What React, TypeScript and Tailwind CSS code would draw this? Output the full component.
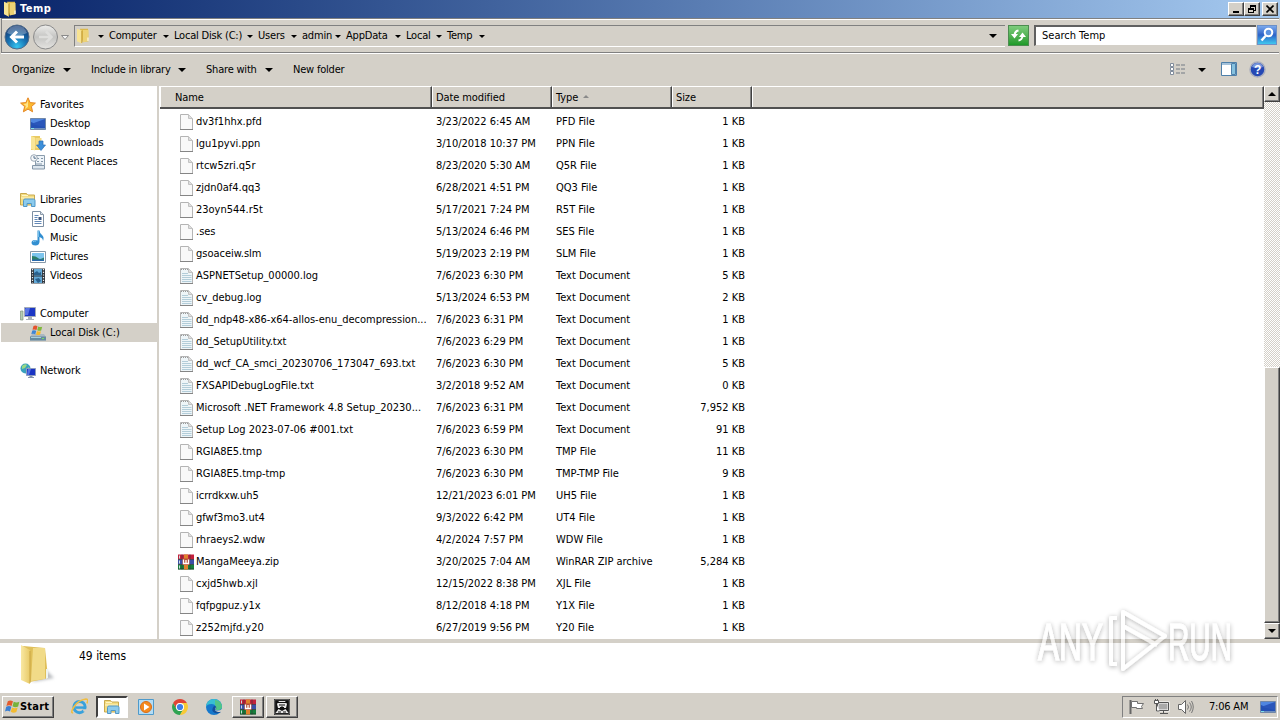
import React from "react"

type FileKind = "blank" | "text" | "rar"

type Entry = {
    name: string
    date: string
    type: string
    size: string
    kind?: FileKind
}

const files: Entry[] = [
    { name: "dv3f1hhx.pfd", date: "3/23/2022 6:45 AM", type: "PFD File", size: "1 KB" },
    { name: "lgu1pyvi.ppn", date: "3/10/2018 10:37 PM", type: "PPN File", size: "1 KB" },
    { name: "rtcw5zri.q5r", date: "8/23/2020 5:30 AM", type: "Q5R File", size: "1 KB" },
    { name: "zjdn0af4.qq3", date: "6/28/2021 4:51 PM", type: "QQ3 File", size: "1 KB" },
    { name: "23oyn544.r5t", date: "5/17/2021 7:24 PM", type: "R5T File", size: "1 KB" },
    { name: ".ses", date: "5/13/2024 6:46 PM", type: "SES File", size: "1 KB" },
    { name: "gsoaceiw.slm", date: "5/19/2023 2:19 PM", type: "SLM File", size: "1 KB" },
    { name: "ASPNETSetup_00000.log", date: "7/6/2023 6:30 PM", type: "Text Document", size: "5 KB", kind: "text" },
    { name: "cv_debug.log", date: "5/13/2024 6:53 PM", type: "Text Document", size: "2 KB", kind: "text" },
    { name: "dd_ndp48-x86-x64-allos-enu_decompression...", date: "7/6/2023 6:31 PM", type: "Text Document", size: "1 KB", kind: "text" },
    { name: "dd_SetupUtility.txt", date: "7/6/2023 6:29 PM", type: "Text Document", size: "1 KB", kind: "text" },
    { name: "dd_wcf_CA_smci_20230706_173047_693.txt", date: "7/6/2023 6:30 PM", type: "Text Document", size: "5 KB", kind: "text" },
    { name: "FXSAPIDebugLogFile.txt", date: "3/2/2018 9:52 AM", type: "Text Document", size: "0 KB", kind: "text" },
    { name: "Microsoft .NET Framework 4.8 Setup_20230...", date: "7/6/2023 6:31 PM", type: "Text Document", size: "7,952 KB", kind: "text" },
    { name: "Setup Log 2023-07-06 #001.txt", date: "7/6/2023 6:59 PM", type: "Text Document", size: "91 KB", kind: "text" },
    { name: "RGIA8E5.tmp", date: "7/6/2023 6:30 PM", type: "TMP File", size: "11 KB" },
    { name: "RGIA8E5.tmp-tmp", date: "7/6/2023 6:30 PM", type: "TMP-TMP File", size: "9 KB" },
    { name: "icrrdkxw.uh5", date: "12/21/2023 6:01 PM", type: "UH5 File", size: "1 KB" },
    { name: "gfwf3mo3.ut4", date: "9/3/2022 6:42 PM", type: "UT4 File", size: "1 KB" },
    { name: "rhraeys2.wdw", date: "4/2/2024 7:57 PM", type: "WDW File", size: "1 KB" },
    { name: "MangaMeeya.zip", date: "3/20/2025 7:04 AM", type: "WinRAR ZIP archive", size: "5,284 KB", kind: "rar" },
    { name: "cxjd5hwb.xjl", date: "12/15/2022 8:38 PM", type: "XJL File", size: "1 KB" },
    { name: "fqfpgpuz.y1x", date: "8/12/2018 4:18 PM", type: "Y1X File", size: "1 KB" },
    { name: "z252mjfd.y20", date: "6/27/2019 9:56 PM", type: "Y20 File", size: "1 KB" },
]

const Icon = ({ children, size = 16 }: { children: React.ReactNode; size?: number }) => (
    <svg width={size} height={size} viewBox="0 0 16 16" className="block shrink-0">
        {children}
    </svg>
)

const PageIcon = ({ lines }: { lines?: boolean }) => (
    <Icon>
        <path d="M2.500.5h8l4 4v11h-12z" fill={lines ? "#eef5f8" : "#f9f9f9"} stroke="#b4b4b4" />
        <path d="M2 15.500h13" stroke="#858585" />
        <path d="M10.500.5v4h4" fill="#dedede" stroke="#c2c2c2" />
        {lines && (
            <>
                <path d="M4 5.500h6M4 7.500h9.500M4 9.500h9.500M4 11.500h9.500M4 13.500h9.500" stroke="#b3cdd9" />
                <path d="M3 1.500h8" stroke="#999" strokeDasharray="1 1" />
            </>
        )}
    </Icon>
)

const RarIcon = () => (
    <Icon>
        <path d="M0 .5h16v5H0z" fill="#c3203c" />
        <path d="M0 5.500h16v5H0z" fill="#3b4ea6" />
        <path d="M0 10.500h16v5H0z" fill="#16803c" />
        <path d="M0 5.500h16M0 10.500h16M0 15h16" stroke="#252525" strokeWidth=".6" />
        <path d="M1.500 1.500v3M1.500 6.500v3M1.500 11.500v3" stroke="#c8dcdc" />
        <path d="M4 .5v5M4 10.500v5M12 .5v5M12 10.500v5" stroke="#333" strokeWidth=".6" />
        <path d="M6 .5h4v15H6z" fill="#e0822c" />
        <path d="M4.500 4.500h7v6.500h-7z" fill="#b84e35" />
        <path d="M5.500 5.500v4h5v-4M8 6v3.500" stroke="#fff" strokeWidth="1.300" fill="none" />
    </Icon>
)

const FolderIcon = () => (
    <Icon>
        <path d="M5 .8h8l.5 12.500-6 .7z" fill="#dcb94a" />
        <path d="M8 2h5.500v11L8 14.500z" fill="#edd274" />
        <path d="M2 .8l5 2v13l-5-2.500z" fill="#f8e392" />
        <path d="M6.800 3v12" stroke="#bf9730" strokeWidth=".9" />
        <path d="M12.500 9.500h1V13h-1z" fill="#fff" />
    </Icon>
)

const StarIcon = () => (
    <Icon>
        <path d="M8 .8l2.100 4.800 5.300.5-4 3.500 1.200 5.200L8 12.100l-4.600 2.700 1.200-5.200-4-3.500 5.300-.5z" fill="#fbb92f" stroke="#e58724" />
        <path d="M8 3v7L5 12l1-3-2.500-2 3-.5z" fill="#ffe48a" />
    </Icon>
)

const DesktopIcon = () => (
    <Icon>
        <path d="M.5 2.500h15v11H.5z" fill="#2350b4" stroke="#7188a8" />
        <path d="M1 3h14v5Q8 10 1 6z" fill="#4f86e0" />
        <path d="M1 8l14-5v8z" fill="#2a56ba" />
        <path d="M1 12.500h14" stroke="#6f8fc0" />
        <path d="M1 12.500h3" stroke="#7fe0e8" />
    </Icon>
)

const DownloadsIcon = () => (
    <Icon>
        <path d="M1 1h9v14H1z" fill="#e9ca63" />
        <path d="M1 1l4 1.500v13L1 14z" fill="#f9e697" />
        <path d="M5.500 3h6v10h-6z" fill="#f4dc84" />
        <path d="M9 6h4v4h2.500L11 15.500 6.500 10H9z" fill="#3c8fda" stroke="#286eb4" strokeWidth=".7" />
    </Icon>
)

const RecentIcon = () => (
    <Icon>
        <path d="M5.500 1.500h9v10h-9z" fill="#eef4f9" stroke="#8a9cac" />
        <path d="M2.500 11.500h12V15h-12zM7 4.500h2m2 0h2M7 7.500h2m2 0h2M6 10h6" fill="#dde6ee" stroke="#8396a8" />
        <circle cx="4" cy="4" r="3.300" fill="#f6f8fa" stroke="#9ca9b5" />
        <path d="M4 2v2.200h2" stroke="#56708c" fill="none" />
    </Icon>
)

const LibrariesIcon = () => (
    <Icon>
        <path d="M.5 1.500h6l1 1.500h7v10H.5z" fill="#f3dd83" stroke="#c9a94d" />
        <path d="M2 3.500h6M1 6h13" stroke="#fff5c4" />
        <path d="M3.500 14.500v-6q0-1.500 1.500-1.500h8.500q1.500 0 1.500 1.500v6h-3.500v-3H7v3z" fill="#8ccbed" stroke="#5298c6" />
    </Icon>
)

const DocumentIcon = () => (
    <Icon>
        <path d="M2.500.5h8l3 3v12h-11z" fill="#fff" stroke="#7d8fa3" />
        <path d="M10.500.5v3h3" fill="#dbe3ec" stroke="#8c9aa9" />
        <path d="M4.500 4.500h4M4.500 6.500h3M4.500 8.500h3M4.500 10.500h7M4.500 12.500h7" stroke="#6288b7" />
        <path d="M8.500 6h3v3h-3z" fill="#3b557d" />
    </Icon>
)

const MusicIcon = () => (
    <Icon>
        <path d="M7.500.5h2q0 2.500 2.500 4.500t1 6q0-3-3.500-4v5q-.5 3.500-4 3.500T1.500 13q0-3 3.500-3 1.500 0 2.500.5z" fill="#328fd1" />
        <path d="M8.300 1v6M3 12q1-1.500 3-1" stroke="#88caef" fill="none" />
    </Icon>
)

const PicturesIcon = () => (
    <Icon>
        <path d="M.5 2.500h15v11H.5z" fill="#fff" stroke="#8798a8" />
        <path d="M2 4h12v8H2z" fill="#7cc4ed" />
        <path d="M2 7q4 0 6 2t6-.5V12H2z" fill="#2b7f68" />
        <path d="M2 10.500h12V12H2z" fill="#2768ab" />
    </Icon>
)

const VideosIcon = () => (
    <Icon>
        <path d="M1 .5h14v15H1z" fill="#30373f" />
        <path d="M4 1h8v6.500H4zM4 8.500h8V15H4z" fill="#63a9d7" />
        <path d="M4 5l3-2 2 2 2-1v3H4zM5 11l4-1 2 3-3 2z" fill="#29618e" />
        <path d="M2.500 1v14M13.500 1v14" stroke="#eee" strokeWidth="1.200" strokeDasharray="1.200 1.500" />
    </Icon>
)

const ComputerIcon = () => (
    <Icon>
        <path d="M.5 5H3v9H.5z" fill="#b4ceb1" stroke="#81927f" strokeWidth=".7" />
        <path d="M4.500 1.500h11v9h-11z" fill="#1c37c6" stroke="#a2aab8" />
        <path d="M6 2h4L8 9H5V3z" fill="#5874e4" />
        <path d="M8 11h4v2h2v1H6v-1h2z" fill="#a9b1bb" />
    </Icon>
)

const DiskIcon = () => (
    <Icon>
        <path d="M2 9h12l2 3v3.500H0V12z" fill="#aab8c2" />
        <path d="M0 11.500h16v4H0z" fill="#668ba0" />
        <path d="M1 12.500h10" stroke="#a8d1dd" />
        <path d="M12 13.500h2" stroke="#77e35d" />
        <path d="M3.500 1q2-1 4 .3L6.500 5q-2-1-4-.2z" fill="#e5532d" />
        <path d="M8.200 1.500q2 1 4 .2l-1 3.800q-2 .7-4-.3z" fill="#7fb93b" />
        <path d="M2.300 5.500q2-.8 4 .2l-1 3.500q-2-1-4-.2z" fill="#3f86d4" />
        <path d="M7 6q2 1 4 .2l-1 3.600q-2 .7-4-.3z" fill="#f4b92d" />
    </Icon>
)

const NetworkIcon = () => (
    <Icon>
        <circle cx="5.500" cy="5.500" r="5" fill="#3aa1bd" />
        <path d="M2 3q3-3 5-1L5 5 2 6zM6 6l3-2 1 3-3 3z" fill="#98d984" />
        <path d="M6.500 5.500h9v7h-9z" fill="#1a34c4" stroke="#8d9bbd" />
        <path d="M8 6h3l-2 6H7z" fill="#5471e3" />
        <path d="M9.500 13h3v1H14v1H8v-1h1.500z" fill="#8594ad" />
    </Icon>
)

const FlagLogo = ({ size = 16 }: { size?: number }) => (
    <Icon size={size}>
        <path d="M3 2.500q2.500-2 5.500 0L7 7.500q-2.500-1.500-5.500 0z" fill="#e35b2d" />
        <path d="M9.300 3q3 1.500 6 0L14 8q-3 1.500-6-.2z" fill="#77b23c" />
        <path d="M1.300 8.300q3-1.500 5.500 0l-1.500 5q-2.500-1.500-5.300 0z" fill="#3b7fd2" />
        <path d="M7.500 9q3 1.500 6 0l-1.400 4.800q-3 1.600-6-.2z" fill="#f3bb31" />
    </Icon>
)

const navItems: { label: string; icon?: React.ReactNode; child?: boolean; active?: boolean }[] = [
    { label: "Favorites", icon: <StarIcon /> },
    { label: "Desktop", icon: <DesktopIcon />, child: true },
    { label: "Downloads", icon: <DownloadsIcon />, child: true },
    { label: "Recent Places", icon: <RecentIcon />, child: true },
    { label: "" },
    { label: "Libraries", icon: <LibrariesIcon /> },
    { label: "Documents", icon: <DocumentIcon />, child: true },
    { label: "Music", icon: <MusicIcon />, child: true },
    { label: "Pictures", icon: <PicturesIcon />, child: true },
    { label: "Videos", icon: <VideosIcon />, child: true },
    { label: "" },
    { label: "Computer", icon: <ComputerIcon /> },
    { label: "Local Disk (C:)", icon: <DiskIcon />, child: true, active: true },
    { label: "" },
    { label: "Network", icon: <NetworkIcon /> },
]

const Caret = ({ small }: { small?: boolean }) => (
    <svg
        width={small ? 6 : 8}
        height={small ? 3 : 4}
        viewBox="0 0 8 4"
        preserveAspectRatio="none"
        className="block shrink-0"
    >
        <path d="M0 0h8L4 4z" fill="#000" />
    </svg>
)

const raised =
    "border border-t-white border-l-white border-r-[#404040] border-b-[#404040] bg-[#d4d0c8] shadow-[inset_-1px_-1px_0_#808080]"

const TitleBar = () => (
    <div className="flex h-[18px] items-center bg-linear-to-r from-[#0a246a] to-[#a6caf0] px-[2px]">
        <FolderIcon />
        <span className="ml-[2px] text-[11px] font-bold tracking-[0.5px] text-white">Temp</span>
        <div className="ml-auto flex">
            <div className={`flex h-[14px] w-4 items-center justify-center ${raised}`}>
                <svg width="10" height="9" className="block">
                    <path d="M2 6h6v2H2z" />
                </svg>
            </div>
            <div className={`flex h-[14px] w-4 items-center justify-center ${raised}`}>
                <svg width="10" height="10" className="block" shapeRendering="crispEdges">
                    <path d="M3 1h6v2H3zM3 3h1v1H3zM8 3h1v4H8zM7 6h1v1H7zM1 4h6v2H1zM1 6h1v3H1zM6 6h1v3H6zM1 8h6v1H1z" />
                </svg>
            </div>
            <div className={`ml-[2px] flex h-[14px] w-4 items-center justify-center ${raised}`}>
                <svg width="8" height="8" className="block">
                    <path d="M.5.5l7 7M7.500.5l-7 7" stroke="#000" strokeWidth="1.600" />
                </svg>
            </div>
        </div>
    </div>
)

const crumbs = [
    { label: "Computer", width: "w-[65px]" },
    { label: "Local Disk (C:)", width: "w-[84px]" },
    { label: "Users", width: "w-[44px]" },
    { label: "admin", width: "w-[44px]" },
    { label: "AppData", width: "w-[60px]" },
    { label: "Local", width: "w-[41px]" },
    { label: "Temp", width: "w-[43px]" },
]

const AddressBar = () => (
    <div className="mx-px flex h-[35px] border-t border-b border-l border-[#808080] pt-[6px] pr-px pl-px tracking-[-0.2px] shadow-[inset_0_1px_0_#fff,0_1px_0_#fff]">
        <svg width="66" height="28" viewBox="0 0 66 28" className="-mt-[2px] block shrink-0">
            <defs>
                <radialGradient id="back" cx=".5" cy=".9" r=".8">
                    <stop offset="0" stopColor="#35c5f0" />
                    <stop offset=".5" stopColor="#1874b4" />
                    <stop offset="1" stopColor="#123c78" />
                </radialGradient>
                <linearGradient id="forward" x1="0" y1="0" x2="0" y2="1">
                    <stop offset="0" stopColor="#eeeeec" />
                    <stop offset=".5" stopColor="#c4c4c2" />
                    <stop offset="1" stopColor="#e5e4e1" />
                </linearGradient>
            </defs>
            <circle cx="14" cy="14" r="12" fill="url(#back)" stroke="#526c88" />
            <path d="M4 10a10.500 10.500 0 0120 0q-10 5-20 0z" fill="#fff" opacity=".3" />
            <path d="M21 14H9M14 8.500L8.500 14l5.500 5.500" fill="none" stroke="#fff" strokeWidth="3" />
            <circle cx="42.500" cy="14" r="12" fill="url(#forward)" stroke="#8a8a8a" />
            <path d="M36 14h12M43 8.500l5.500 5.500-5.500 5.500" fill="none" stroke="#dededc" strokeWidth="2.500" />
            <path d="M58.500 12.500h7l-3.500 4z" fill="#f5f5f5" stroke="#8a8a8a" />
        </svg>
        <div className="ml-[5px] flex h-[22px] w-[931px] items-center border-t border-b border-l border-t-[#808080] border-b-white border-l-[#808080]">
            <FolderIcon />
            <div className="ml-[7px]">
                <Caret small />
            </div>
            {crumbs.map((crumb) => (
                <div key={crumb.label} className={`flex items-center justify-between pl-[5px] ${crumb.width}`}>
                    <span>{crumb.label}</span>
                    <Caret small />
                </div>
            ))}
            <div className="mr-[8px] ml-auto">
                <Caret />
            </div>
        </div>
        <div className="ml-[3px] h-[21px] w-[21px] border border-[#4c8c50] bg-linear-to-b from-[#7ccc7c] to-[#1c9a28]">
            <svg width="19" height="19" className="block">
                <path d="M9.500 4.500Q6 5 5.500 9M9.500 14.500q3.500-.5 4-4.500" stroke="#fff" strokeWidth="2" fill="none" />
                <path d="M2 8h7l-3.500 4.500zM10 11h7l-3.500-4.500z" fill="#fff" />
            </svg>
        </div>
        <div className="ml-[5px] flex h-[21px] w-[222px] items-center border-t-2 border-b border-l-2 border-t-[#606060] border-b-[#d4d0c8] border-l-[#606060] bg-white pl-[6px]">
            <span className="tracking-normal">Search Temp</span>
        </div>
        <div className="ml-px h-5 w-5 border border-[#6b90c8] bg-linear-to-b from-[#7aa8ec] via-[#2d62c8] to-[#42c8ee]">
            <svg width="18" height="18" className="block">
                <circle cx="10.500" cy="6.500" r="3.800" fill="#5b92e0" stroke="#fff" strokeWidth="2" />
                <path d="M7.500 10L3.500 14.500" stroke="#fff" strokeWidth="2.500" />
            </svg>
        </div>
    </div>
)

const Toolbar = () => (
    <div className="flex h-[32px] items-center pt-px pr-[14px] pl-3 tracking-[-0.2px]">
        <div className="flex w-[79px] items-center">
            <span className="w-[51px]">Organize</span>
            <Caret />
        </div>
        <div className="flex w-[115px] items-center">
            <span className="w-[87px]">Include in library</span>
            <Caret />
        </div>
        <div className="flex w-[87px] items-center">
            <span className="w-[59px]">Share with</span>
            <Caret />
        </div>
        <span>New folder</span>
        <svg width="16" height="13" className="ml-auto block">
            <path d="M.5.5h3v3h-3zM.5 4.500h3v3h-3zM.5 8.500h3v3h-3z" fill="#fff" stroke="#808c9c" />
            <path d="M6 2h4m1 0h4M6 6h4m1 0h4M6 10h4m1 0h4" stroke="#737b84" />
        </svg>
        <div className="ml-[12px]">
            <Caret />
        </div>
        <svg width="17" height="15" className="ml-[15px] block">
            <path d="M.5.5h15v13H.5z" fill="#fff" stroke="#4e80aa" />
            <path d="M1 2h9" stroke="#a4c2da" strokeWidth="2" />
            <path d="M10.500 1.500h4v11h-4z" fill="#87c2df" stroke="#4e80aa" />
        </svg>
        <svg width="17" height="17" className="ml-[11px] block">
            <circle cx="8.500" cy="8.500" r="7.500" fill="#2548b4" stroke="#aaaebd" strokeWidth="1.500" />
            <path d="M3 6q1-4 5.500-4T14 6q-5 2-11 0z" fill="#7795dc" />
            <text x="8.500" y="13" textAnchor="middle" fill="#fff" fontSize="12" fontWeight="bold" fontFamily="Liberation Sans, sans-serif">?</text>
        </svg>
    </div>
)

const Sidebar = () => (
    <div className="h-full w-[157px] shrink-0 bg-white pt-[9px] tracking-[-0.1px]">
        {navItems.map((item, i) => (
            <div
                key={i}
                className={`ml-px flex h-[19px] items-center ${item.child ? "pl-[29px]" : "pl-[19px]"} ${item.active ? "bg-[#d4d0c8]" : ""}`}
            >
                {item.icon}
                <span className="ml-1">{item.label}</span>
            </div>
        ))}
    </div>
)

const headCell =
    "flex h-full items-center border-t border-l border-r border-t-white border-l-white border-r-[#404040] pt-px shadow-[inset_-1px_0_0_#808080]"

const FileList = () => (
    <div className="h-full min-w-0 grow overflow-hidden bg-white">
        <div className="flex h-[23px] border-b-2 border-[#505050] bg-[#d4d0c8] tracking-[-0.1px]">
            <div className={`w-[272px] pl-[14px] ${headCell}`}>Name</div>
            <div className={`w-[120px] pl-[3px] ${headCell}`}>Date modified</div>
            <div className={`w-[120px] pl-[3px] ${headCell}`}>
                Type
                <svg width="6" height="3" className="mb-[3px] ml-[5px] block">
                    <path d="M0 3l3-3 3 3z" fill="#8a8a8a" />
                </svg>
            </div>
            <div className={`w-[80px] pl-[3px] ${headCell}`}>Size</div>
            <div className={`grow ${headCell}`} />
        </div>
        <div className="pt-[2px]">
            {files.map((file) => (
                <div key={file.name} className="flex h-[22px] items-center">
                    <div className="ml-[18px] w-[18px] shrink-0 pb-px">
                        {file.kind === "rar" ? <RarIcon /> : <PageIcon lines={file.kind === "text"} />}
                    </div>
                    <span className="w-[240px] shrink-0">{file.name}</span>
                    <span className="w-[120px] shrink-0">{file.date}</span>
                    <span className="w-[120px] shrink-0">{file.type}</span>
                    <span className="w-[69px] shrink-0 text-right">{file.size}</span>
                </div>
            ))}
        </div>
    </div>
)

const Scrollbar = () => (
    <div className="flex h-full w-4 shrink-0 flex-col bg-[repeating-conic-gradient(#d4d0c8_0_25%,#fff_0_50%)] bg-size-[2px_2px]">
        <div className={`flex h-4 shrink-0 items-center justify-center ${raised}`}>
            <svg width="8" height="4" className="block">
                <path d="M0 4l4-4 4 4z" />
            </svg>
        </div>
        <div className="h-[265px] shrink-0" />
        <div className={`grow ${raised}`} />
        <div className={`flex h-4 shrink-0 items-center justify-center ${raised}`}>
            <Caret />
        </div>
    </div>
)

const Watermark = () => (
    <svg width="230" height="84" viewBox="0 0 230 84" className="absolute top-[600px] left-[1026px]">
        <defs>
            <filter id="glow" x="-10%" y="-20%" width="120%" height="140%">
                <feDropShadow dx="0" dy="1" stdDeviation="2.500" floodColor="#000" floodOpacity=".5" />
            </filter>
        </defs>
        <g
            filter="url(#glow)"
            opacity=".65"
            fill="#fff"
            stroke="#fff"
            fontFamily="Liberation Sans Narrow, Liberation Sans, sans-serif"
            fontSize="52"
        >
            <text x="12" y="60" textLength="65" lengthAdjust="spacingAndGlyphs">ANY</text>
            <text x="142" y="60" textLength="64" lengthAdjust="spacingAndGlyphs">RUN</text>
            <g fill="none" strokeWidth="4" strokeLinejoin="round">
                <path d="M97 12l42 24-42 33z" />
                <path d="M91 18h-6v46h6M97 26l34 19" />
            </g>
        </g>
    </svg>
)

const Tray = () => (
    <div className="mr-[2px] ml-auto flex h-[22px] w-[156px] items-center border border-t-[#808080] border-r-white border-b-white border-l-[#808080] pl-[6px]">
        <svg width="16" height="16" className="block">
            <path d="M1.500 1v14" stroke="#666" strokeWidth="2" />
            <path d="M2.500 2.500h6v2h6l-2 3 1 2h-6v-1h-5z" fill="#fff" stroke="#707070" />
        </svg>
        <svg width="17" height="17" className="ml-2 block">
            <path d="M4.500 4.500h11v8h-11z" fill="#a9a9a9" stroke="#fff" strokeWidth="2" />
            <path d="M4.500 4.500h11v8h-11zM7 15.500h8M10.500 13v2" fill="none" stroke="#555" />
            <path d="M1.500 2.500h4v3h-4zM3.500 6v7h3M2.500 1v2M4.500 1v2" fill="#fff" stroke="#555" />
        </svg>
        <svg width="17" height="16" className="ml-[7px] block">
            <path d="M1.500 5.500h3l4-4v13l-4-4h-3z" fill="#fff" stroke="#666" />
            <path d="M10.500 5.500q2 2.500 0 5M12.500 3.500q3.500 4.500 0 9M14.500 2q3.500 6 0 12" fill="none" stroke="#777" />
        </svg>
        <span className="ml-[15px] tracking-[-0.2px]">7:06 AM</span>
        <div className="mr-px ml-auto">
            <DesktopIcon />
        </div>
    </div>
)

const Taskbar = () => (
    <div className="flex h-[27px] items-center bg-[#d4d0c8] pl-[2px]">
        <div className={`flex h-[22px] w-[52px] items-center pl-[2px] ${raised}`}>
            <FlagLogo size={15} />
            <span className="text-[11px] font-bold tracking-[0.2px]">Start</span>
        </div>
        <div className="ml-[17px]">
            <Icon size={17}>
                <circle cx="8" cy="8.500" r="5.300" fill="none" stroke="#38a1dc" strokeWidth="2.800" />
                <path d="M4 9h9.500" stroke="#38a1dc" strokeWidth="2.300" />
                <path d="M11 10.500h4V13h-3z" fill="#d4d0c8" />
                <path d="M2 14Q-1 14 3 8T14 1q3 0 1 4" fill="none" stroke="#f0be43" strokeWidth="1.500" />
            </Icon>
        </div>
        <div className="ml-[8px] flex h-[22px] w-8 items-center justify-center border-2 border-t-[#404040] border-r-white border-b-white border-l-[#404040] bg-white">
            <LibrariesIcon />
        </div>
        <div className="ml-[10px]">
            <Icon>
                <path d="M.5.5h15v15H.5z" fill="#b4dcf4" stroke="#4e9acb" />
                <circle cx="8" cy="8" r="5.500" fill="#f58a1e" stroke="#d96c16" />
                <path d="M6 4.500L11.500 8 6 11.500z" fill="#fff" />
            </Icon>
        </div>
        <div className="ml-[18px]">
            <Icon>
                <path d="M1.100 4A8 8 0 0114.900 4H8a4 4 0 00-3.500 6z" fill="#df4435" />
                <path d="M1.100 4A8 8 0 008 16l3.500-6A4 4 0 014.500 10z" fill="#2fa351" />
                <path d="M14.900 4A8 8 0 018 16l3.500-6A4 4 0 0011.500 6L8 4z" fill="#f8ca35" />
                <circle cx="8" cy="8" r="4" fill="#fff" />
                <circle cx="8" cy="8" r="3.100" fill="#3d7ee8" />
            </Icon>
        </div>
        <div className="ml-[18px]">
            <Icon>
                <circle cx="8" cy="8" r="8" fill="#1678cc" />
                <path d="M0 8Q1 0 8 0t8 8q-.5 3-4 3H9q2-1 1-3.500T5.500 5Q1 5 0 8z" fill="#38bfd2" />
                <path d="M9 1q7 1 7 7-.5 3-4 3H9q2-2 0-5z" fill="#5dc765" opacity=".7" />
                <path d="M8 7q-4 5 1 7 3 1 6-1-4 0-6-2 2-1.500 1-3.500z" fill="#13509c" />
                <path d="M10 8q.5 2-1 3 4 1.500 7-1v2l-2 1q-4 0-5-2z" fill="#d4d0c8" />
            </Icon>
        </div>
        <div className={`ml-[10px] flex h-[22px] w-8 items-center justify-center ${raised}`}>
            <RarIcon />
        </div>
        <div className={`ml-[2px] flex h-[22px] w-8 items-center justify-center ${raised}`}>
            <Icon>
                <path d="M0 0h16v16H0z" fill="#111" />
                <path d="M.7.7h14.600v14.600H.7z" fill="none" stroke="#ccc" strokeWidth=".5" />
                <path d="M5 2h6l2 3-1 4H4L3 5zM1.500 14l3-4L8 12l3.500-2 3 4z" fill="#e8e8e8" />
                <path d="M3 3.500h10M5 6h2m2 0h2M8 5v3M6 8.500h4M4 13h3m2 0h3" stroke="#111" fill="none" />
            </Icon>
        </div>
        <Tray />
    </div>
)

export default function App() {
    return (
        <div className="relative flex h-[720px] w-[1280px] flex-col overflow-hidden bg-[#d4d0c8] font-['DejaVu_Sans_Condensed','DejaVu_Sans',sans-serif] text-[11px] leading-[14px] tracking-[-0.01px] whitespace-nowrap text-black [font-stretch:condensed]">
            <TitleBar />
            <AddressBar />
            <Toolbar />
            <div className="flex h-[554px] shrink-0 pt-px">
                <Sidebar />
                <div className="w-[3px] shrink-0 border-r border-white bg-[#d4d0c8]" />
                <FileList />
                <Scrollbar />
            </div>
            {/* Details pane */}
            <div className="mt-[4px] flex h-[49px] shrink-0 bg-white">
                <div className="mt-[2px] ml-[14px]">
                    <svg width="46" height="42" viewBox="0 0 46 42" className="block">
                        <defs>
                            <linearGradient id="leaf" x1="0" x2="1" y1="0" y2="0">
                                <stop offset="0" stopColor="#f9e8a3" />
                                <stop offset="1" stopColor="#e8ca68" />
                            </linearGradient>
                            <filter id="soft">
                                <feGaussianBlur stdDeviation="1.800" />
                            </filter>
                        </defs>
                        <path d="M18 37l22-4-8-8z" fill="#b9bcc0" filter="url(#soft)" />
                        <path d="M9 1l22 2 3 30-18 4z" fill="#dfbf59" />
                        <path d="M19 3h12v31l-14 2z" fill="#f1db88" />
                        <path d="M7 0l9 5v34l-9-4z" fill="url(#leaf)" />
                        <path d="M16 6v32" stroke="#c9a545" />
                        <path d="M32 24h2v9l-2 1z" fill="#eef4f0" />
                    </svg>
                </div>
                <span className="mt-[6px] ml-[19px] text-[12px]">49 items</span>
            </div>
            <div className="h-px shrink-0 bg-white" />
            <Taskbar />
            <Watermark />
        </div>
    )
}
